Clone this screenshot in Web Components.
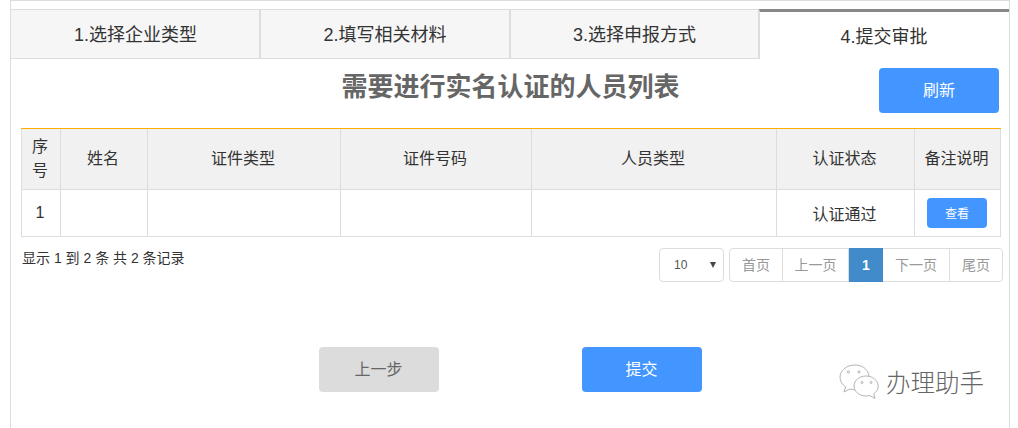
<!DOCTYPE html>
<html lang="zh">
<head>
<meta charset="utf-8">
<title>提交审批</title>
<style>
  body {
    margin: 0;
    height: 428px;
    overflow: hidden;
    background: #fff;
    font-family: "Liberation Sans", "Noto Sans CJK SC", sans-serif;
    color: #333;
  }
</style>
</head>
<body>
<step-panel>
  <step-tabs>
    <step-tab>1.选择企业类型</step-tab>
    <step-tab>2.填写相关材料</step-tab>
    <step-tab>3.选择申报方式</step-tab>
    <step-tab active>4.提交审批</step-tab>
  </step-tabs>
  <title-bar>需要进行实名认证的人员列表</title-bar>
  <person-table></person-table>
  <table-footer></table-footer>
  <form-actions></form-actions>
  <brand-mark>办理助手</brand-mark>
</step-panel>

<script>
  // Small helper so each element only declares its markup
  class ShadowElement extends HTMLElement {
    constructor(markup) {
      super();
      this.attachShadow({ mode: "open" });
      const template = document.createElement("template");
      template.innerHTML = markup;
      this.shadowRoot.appendChild(template.content.cloneNode(true));
    }
  }

  class BlueButton extends ShadowElement {
    constructor() {
      super(`
        <style>
          :host {
            display: flex;
            align-items: center;
            justify-content: center;
            box-sizing: border-box;
            width: 120px;
            height: 45px;
            padding-bottom: 3px;
            border-radius: 4px;
            background: #4395ff;
            color: #fff;
            font-size: 16px;
          }
          :host([muted]) { background: #dcdcdc; color: #666; }
          :host([small]) { width: 60px; height: 30px; padding-bottom: 1px; font-size: 12px; }
        </style>
        <slot></slot>
      `);
    }
  }

  class StepPanel extends ShadowElement {
    constructor() {
      super(`
        <style>
          :host {
            display: block;
            position: relative;
            box-sizing: border-box;
            width: 1000px;
            height: 429px;
            margin-left: 10px;
            padding-top: 8px;
            border: 1px solid #ddd;
            border-bottom: 0;
          }
        </style>
        <slot></slot>
      `);
    }
  }

  class StepTabs extends ShadowElement {
    constructor() {
      super(`
        <style>
          :host {
            display: grid;
            grid-template-columns: 250px 249px 249px 250px;
            height: 50px;
          }
        </style>
        <slot></slot>
      `);
    }
  }

  class StepTab extends ShadowElement {
    constructor() {
      super(`
        <style>
          :host {
            display: flex;
            align-items: center;
            justify-content: center;
            box-sizing: border-box;
            padding: 0 0 2px 1px;
            border: 1px solid #ddd;
            border-left-width: 0;
            border-right-width: 2px;
            background: #f6f6f6;
            color: #333;
            font-size: 18px;
          }
          :host(:nth-child(2)) { border-right-width: 1px; padding-left: 0; }
          :host(:nth-child(3)) { border-left-width: 1px; border-right-width: 1px; padding-left: 0; }
          :host([active]) {
            background: #fff;
            color: #333;
            border: 0;
            border-left: 1px solid #ddd;
            border-top: 3px solid #888;
            padding: 0 1px 1px 0;
          }
        </style>
        <slot></slot>
      `);
    }
  }

  class TitleBar extends ShadowElement {
    constructor() {
      super(`
        <style>
          :host {
            display: grid;
            grid-template-columns: 1fr auto 1fr;
            align-items: start;
            box-sizing: border-box;
            height: 69px;
            padding: 9px 10px 0;
          }
          h1 {
            grid-column: 2;
            margin: 0 0 0 1px;
            font-size: 26px;
            line-height: 38px;
            font-weight: 700;
            color: #666;
          }
          blue-button { grid-column: 3; justify-self: end; }
        </style>
        <h1><slot></slot></h1>
        <blue-button>刷新</blue-button>
      `);
    }
  }

  class PersonTable extends ShadowElement {
    constructor() {
      super(`
        <style>
          :host {
            display: block;
            width: 980px;
            margin-left: 10px;
            border-top: 1px solid #ffae00;
          }
          table {
            width: 980px;
            table-layout: fixed;
            border-collapse: collapse;
            font-size: 16px;
            color: #333;
          }
          th, td {
            padding: 0 2px 0 0;
            border: 1px solid #ddd;
            text-align: center;
            font-weight: 400;
          }
          th { height: 60px; border-top: 0; background: #f1f1f1; line-height: 24px; }
          td { height: 46px; }
          blue-button { margin-left: 12px; }
        </style>
        <table>
          <colgroup>
            <col style="width:39px"><col style="width:87px"><col style="width:193px">
            <col style="width:191px"><col style="width:245px"><col style="width:138px"><col style="width:86px">
          </colgroup>
          <thead>
            <tr>
              <th>序<br>号</th><th>姓名</th><th>证件类型</th><th>证件号码</th>
              <th>人员类型</th><th>认证状态</th><th>备注说明</th>
            </tr>
          </thead>
          <tbody>
            <tr>
              <td>1</td><td></td><td></td><td></td><td></td>
              <td>认证通过</td>
              <td><blue-button small>查看</blue-button></td>
            </tr>
          </tbody>
        </table>
      `);
    }
  }

  class TableFooter extends ShadowElement {
    constructor() {
      super(`
        <style>
          :host {
            display: flex;
            justify-content: space-between;
            align-items: flex-start;
            width: 981px;
            height: 34px;
            margin: 11px 0 0 11px;
            font-size: 14px;
          }
          .info { color: #333; line-height: 20px; }
          .right { display: flex; gap: 5px; }
          .size {
            display: flex;
            align-items: center;
            justify-content: space-between;
            box-sizing: border-box;
            width: 65px;
            height: 34px;
            padding: 0 7px 0 14px;
            border: 1px solid #ddd;
            border-radius: 4px;
            font-size: 12px;
            color: #555;
          }
          .size i {
            width: 0;
            height: 0;
            border: 3.5px solid transparent;
            border-top: 6px solid #444;
            border-bottom: 0;
          }
          .pages {
            display: grid;
            grid-template-columns: 53px 66px 34px 67px 52px;
            box-sizing: border-box;
            height: 34px;
            border: 1px solid #ddd;
            border-radius: 4px;
            color: #999;
          }
          .pages span {
            display: flex;
            align-items: center;
            justify-content: center;
            padding-bottom: 3px;
            border-right: 1px solid #ddd;
          }
          .pages span:last-child { border-right: 0; }
          .pages .on {
            margin: -1px 0;
            padding-bottom: 0;
            border: 0;
            background: #428bca;
            color: #fff;
            font-weight: 700;
          }
        </style>
        <div class="info">显示 1 到 2 条 共 2 条记录</div>
        <div class="right">
          <div class="size">10<i></i></div>
          <div class="pages">
            <span>首页</span><span>上一页</span><span class="on">1</span><span>下一页</span><span>尾页</span>
          </div>
        </div>
      `);
    }
  }

  class FormActions extends ShadowElement {
    constructor() {
      super(`
        <style>
          :host {
            display: flex;
            justify-content: center;
            gap: 143px;
            margin-top: 65px;
          }
        </style>
        <blue-button muted>上一步</blue-button>
        <blue-button>提交</blue-button>
      `);
    }
  }

  // Overlaid account watermark, sits on top of the page corner
  class BrandMark extends ShadowElement {
    constructor() {
      super(`
        <style>
          :host {
            position: absolute;
            left: 828px;
            top: 362px;
            display: flex;
            align-items: center;
            gap: 7px;
            color: #666;
            font-size: 24.5px;
            font-weight: 300;
            line-height: 38px;
          }
          svg { display: block; margin-bottom: 3px; }
        </style>
        <svg width="40" height="38" viewBox="0 0 40 38" fill="#fff" stroke="#aaa" stroke-width="0.9">
          <path d="M16 2C7.700 2 1 7.500 1 14.300c0 3.900 2.200 7.300 5.600 9.500L5 29l5.800-3c1.700.5 3.400.8 5.200.8 8.300 0 14-5.500 14-12.500S24.300 2 16 2z"/>
          <path d="M27 13c-6.600 0-12 4.500-12 10s5.400 10 12 10c1.300 0 2.600-.2 3.800-.5L36 35.500l-1.300-4.700C37.400 29 39.200 26.200 39.200 23c0-5.500-5.600-10-12.200-10z"/>
          <circle cx="9.500" cy="9" r="1.100"/><circle cx="20" cy="9" r="1.100"/>
          <circle cx="23" cy="19.500" r="1"/><circle cx="32" cy="19.500" r="1"/>
        </svg>
        <slot></slot>
      `);
    }
  }

  customElements.define("blue-button", BlueButton);
  customElements.define("step-panel", StepPanel);
  customElements.define("step-tabs", StepTabs);
  customElements.define("step-tab", StepTab);
  customElements.define("title-bar", TitleBar);
  customElements.define("person-table", PersonTable);
  customElements.define("table-footer", TableFooter);
  customElements.define("form-actions", FormActions);
  customElements.define("brand-mark", BrandMark);
</script>
</body>
</html>
